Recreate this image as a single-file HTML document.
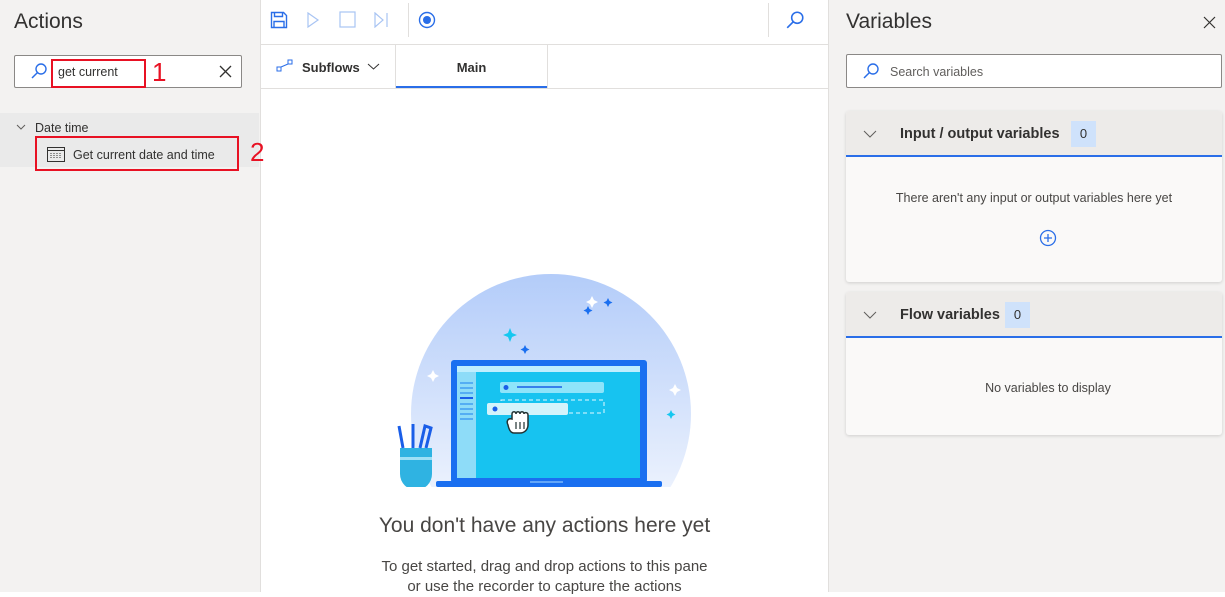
<!DOCTYPE html>
<html><head><meta charset="utf-8"><style>
*{box-sizing:border-box;margin:0;padding:0}
body{width:1225px;height:592px;overflow:hidden;font-family:"Liberation Sans",sans-serif;color:#323130;background:#fff;position:relative}
.a{position:absolute}
.red{position:absolute;border:2px solid #e81123}
</style></head><body>
<!-- left panel -->
<div class="a" style="left:0;top:0;width:261px;height:592px;background:#f3f2f1;border-right:1px solid #e1dfdd"></div>
<div class="a" style="left:14px;top:10px;font-size:21px;color:#323130">Actions</div>
<div class="a" style="left:14px;top:55px;width:228px;height:33px;background:#fff;border:1px solid #8a8886;border-radius:2px"></div>
<svg class="a" style="left:30px;top:62px" width="18" height="18" viewBox="0 0 18 18"><circle cx="11" cy="7" r="5" fill="none" stroke="#2a6ee8" stroke-width="1.4"/><line x1="7.4" y1="10.6" x2="2" y2="16" stroke="#2a6ee8" stroke-width="1.5"/></svg>
<div class="a" style="left:58px;top:65px;font-size:12.5px">get current</div>
<svg class="a" style="left:219px;top:65px" width="13" height="13"><path d="M1 1L12 12M12 1L1 12" stroke="#323130" stroke-width="1.3"/></svg>
<div class="red" style="left:51px;top:59px;width:95px;height:29px"></div>
<div class="a" style="left:152px;top:57px;font-size:26px;color:#e81123">1</div>
<div class="a" style="left:0;top:113px;width:259px;height:54px;background:#eaeaea"></div>
<svg class="a" style="left:16px;top:124px" width="10" height="7"><path d="M1 1L5 5L9 1" stroke="#605e5c" fill="none"/></svg>
<div class="a" style="left:35px;top:121px;font-size:12.5px">Date time</div>
<svg class="a" style="left:47px;top:146px" width="18" height="16" viewBox="0 0 18 16"><rect x="0.5" y="1.5" width="17" height="14" fill="none" stroke="#323130"/><line x1="0.5" y1="4.5" x2="17.5" y2="4.5" stroke="#323130"/><path d="M4 7v6M7 7v6M10 7v6M13 7v6" stroke="#323130" stroke-dasharray="1 1"/></svg>
<div class="a" style="left:73px;top:148px;font-size:12.5px">Get current date and time</div>
<div class="red" style="left:35px;top:136px;width:204px;height:35px"></div>
<div class="a" style="left:250px;top:137px;font-size:26px;color:#e81123">2</div>
<!-- middle -->
<div class="a" style="left:261px;top:44px;width:567px;height:1px;background:#e1dfdd"></div>
<div class="a" style="left:261px;top:88px;width:567px;height:1px;background:#e1dfdd"></div>
<div class="a" style="left:408px;top:3px;width:1px;height:34px;background:#e1dfdd"></div>
<div class="a" style="left:768px;top:3px;width:1px;height:34px;background:#e1dfdd"></div>
<svg class="a" style="left:270px;top:11px" width="18" height="18" viewBox="0 0 18 18"><path d="M1.5 1.5h12l3 3v12h-15z M4.5 1.5v4h8v-4 M4 16.5v-6h10v6" fill="none" stroke="#2a6ee8" stroke-width="1.4"/></svg>
<svg class="a" style="left:306px;top:12px" width="14" height="16"><path d="M2 1L12 8L2 15Z" fill="none" stroke="#a8c4f3" stroke-width="1.2"/></svg>
<svg class="a" style="left:339px;top:11px" width="17" height="17"><rect x="1" y="1" width="15" height="15" fill="none" stroke="#a8c4f3" stroke-width="1.2"/></svg>
<svg class="a" style="left:373px;top:12px" width="16" height="16"><path d="M2 1L10 8L2 15Z" fill="none" stroke="#a8c4f3" stroke-width="1.2"/><line x1="14" y1="1" x2="14" y2="15" stroke="#a8c4f3" stroke-width="1.2"/></svg>
<svg class="a" style="left:418px;top:11px" width="18" height="18"><circle cx="9" cy="9" r="7.5" fill="none" stroke="#2a6ee8" stroke-width="1.4"/><circle cx="9" cy="9" r="4" fill="#2a6ee8"/></svg>
<svg class="a" style="left:785px;top:10px" width="20" height="20" viewBox="0 0 18 18"><circle cx="11" cy="7" r="5" fill="none" stroke="#2a6ee8" stroke-width="1.4"/><line x1="7.4" y1="10.6" x2="2" y2="16" stroke="#2a6ee8" stroke-width="1.5"/></svg>
<div class="a" style="left:395px;top:45px;width:1px;height:43px;background:#e1dfdd"></div>
<div class="a" style="left:547px;top:45px;width:1px;height:43px;background:#e1dfdd"></div>
<svg class="a" style="left:276px;top:59px" width="18" height="13"><rect x="1" y="8" width="4" height="4" fill="none" stroke="#2a6ee8"/><rect x="12" y="1" width="4" height="4" fill="none" stroke="#2a6ee8"/><line x1="5" y1="8" x2="12" y2="5" stroke="#2a6ee8"/></svg>
<div class="a" style="left:302px;top:60px;font-size:13px;font-weight:bold;color:#323130">Subflows</div>
<svg class="a" style="left:367px;top:63px" width="13" height="8"><path d="M1 1L6.5 6L12 1" stroke="#323130" fill="none"/></svg>
<div class="a" style="left:396px;top:60px;width:151px;text-align:center;font-size:13px;font-weight:bold">Main</div>
<div class="a" style="left:396px;top:86px;width:151px;height:2px;background:#2a6ee8"></div>
<div class="a" style="left:828px;top:0;width:1px;height:592px;background:#e1dfdd"></div>
<!-- illustration -->
<svg class="a" style="left:380px;top:270px" width="320" height="225" viewBox="0 0 320 225">
<defs><linearGradient id="g" x1="0" y1="0" x2="0" y2="1"><stop offset="0" stop-color="#b3ccf9"/><stop offset="0.7" stop-color="#e6eefd"/><stop offset="1" stop-color="#fff"/></linearGradient><clipPath id="c"><rect x="0" y="0" width="320" height="217"/></clipPath></defs>
<circle cx="171" cy="144" r="140" fill="url(#g)" clip-path="url(#c)"/>
<rect x="71" y="90" width="196" height="123" rx="3" fill="#1a6ff0"/>
<rect x="77" y="96" width="183" height="112" fill="#17c3f0"/>
<rect x="77" y="96" width="183" height="6" fill="#bfeefe"/>
<rect x="77" y="102" width="19" height="106" fill="#8edcf8"/>
<g stroke="#2f8ff0" stroke-width="1.2"><line x1="80" y1="113" x2="93" y2="113"/><line x1="80" y1="118" x2="93" y2="118"/><line x1="80" y1="123" x2="93" y2="123"/><line x1="80" y1="128" x2="93" y2="128" stroke="#1a5ee8" stroke-width="2"/><line x1="80" y1="134" x2="93" y2="134"/><line x1="80" y1="139" x2="93" y2="139"/><line x1="80" y1="144" x2="93" y2="144"/><line x1="80" y1="149" x2="93" y2="149"/></g>
<rect x="120" y="112" width="104" height="11" rx="2" fill="#8ee4fa"/><circle cx="126" cy="117.5" r="2.5" fill="#1a5ee8"/><line x1="137" y1="117" x2="182" y2="117" stroke="#1a5ee8" stroke-width="1.5"/>
<rect x="121" y="130" width="103" height="13" fill="none" stroke="#e6f9ff" stroke-dasharray="4 3"/>
<rect x="107" y="133" width="81" height="12" rx="2" fill="#d4f3fb"/><circle cx="115" cy="139" r="2.5" fill="#1a5ee8"/>
<path d="M128 155c-2-4 0-7 4-6l0-5c0-3 4-3 4 0c0-3 4-3 4 0c0-3 4-3 4 0c0-2 4-2 4 1l0 10c0 4-3 8-8 8h-6c-3 0-5-3-6-8z" fill="#fff" stroke="#233" stroke-width="1.5"/>
<path d="M136 152v7M140 152v7M144 152v7" stroke="#233" stroke-width="1.2"/>
<rect x="56" y="211" width="226" height="6" rx="2" fill="#1a6ff0"/>
<rect x="150" y="211" width="33" height="2" fill="#63a6f8"/>
<g clip-path="url(#c)"><path d="M20 178h32v26a16 16 0 0 1-32 0z" fill="#2fb3e2"/><rect x="20" y="187" width="32" height="3" fill="#9ee0f6"/></g>
<path d="M23 178l-4-22M33 178v-24M40 178l5-22l6 2l-5 20" stroke="#1a5ee8" stroke-width="3" fill="none"/>
<g fill="#1a6ff0"><path d="M212 26l2 4 4 2-4 2-2 4-2-4-4-2 4-2z" fill="#fff"/><path d="M208 36l1.5 3 3 1.5-3 1.5-1.5 3-1.5-3-3-1.5 3-1.5z"/><path d="M228 28l1.5 3 3 1.5-3 1.5-1.5 3-1.5-3-3-1.5 3-1.5z"/><path d="M130 58l2 5 5 2-5 2-2 5-2-5-5-2 5-2z" fill="#15c7f0"/><path d="M145 75l1.5 3 3 1.5-3 1.5-1.5 3-1.5-3-3-1.5 3-1.5z"/><path d="M53 100l2 4 4 2-4 2-2 4-2-4-4-2 4-2z" fill="#fff"/><path d="M295 114l2 4 4 2-4 2-2 4-2-4-4-2 4-2z" fill="#fff"/><path d="M291 140l1.5 3 3 1.5-3 1.5-1.5 3-1.5-3-3-1.5 3-1.5z" fill="#15c7f0"/></g>
</svg>
<div class="a" style="left:261px;top:514px;width:567px;text-align:center;font-size:21px;color:#484644">You don't have any actions here yet</div>
<div class="a" style="left:261px;top:557px;width:567px;text-align:center;font-size:15px;line-height:20px;color:#484644">To get started, drag and drop actions to this pane<br>or use the recorder to capture the actions</div>
<!-- right -->
<div class="a" style="left:829px;top:0;width:396px;height:592px;background:#f3f2f1"></div>
<div class="a" style="left:846px;top:10px;font-size:21px">Variables</div>
<svg class="a" style="left:1203px;top:16px" width="13" height="13"><path d="M1 1L12 12M12 1L1 12" stroke="#323130" stroke-width="1.2"/></svg>
<div class="a" style="left:846px;top:54px;width:376px;height:34px;background:#fff;border:1px solid #8a8886;border-radius:2px"></div>
<svg class="a" style="left:862px;top:62px" width="18" height="18" viewBox="0 0 18 18"><circle cx="11" cy="7" r="5" fill="none" stroke="#2a6ee8" stroke-width="1.4"/><line x1="7.4" y1="10.6" x2="2" y2="16" stroke="#2a6ee8" stroke-width="1.5"/></svg>
<div class="a" style="left:890px;top:65px;font-size:12.5px;color:#605e5c">Search variables</div>
<div class="a" style="left:846px;top:111px;width:376px;height:171px;background:#faf9f8;border-radius:3px;box-shadow:0 1px 3px rgba(0,0,0,.15)"></div>
<div class="a" style="left:846px;top:111px;width:376px;height:46px;background:#edebe9;border-bottom:2px solid #2a6ee8;border-radius:3px 3px 0 0"></div>
<svg class="a" style="left:863px;top:130px" width="14" height="8"><path d="M1 1L7 7L13 1" stroke="#605e5c" fill="none"/></svg>
<div class="a" style="left:900px;top:126px;font-size:14.5px;font-weight:bold">Input / output variables</div>
<div class="a" style="left:1071px;top:121px;width:25px;height:26px;background:#cfe2fb;font-size:13px;text-align:center;line-height:26px">0</div>
<div class="a" style="left:846px;top:191px;width:376px;text-align:center;font-size:12.5px;color:#484644">There aren't any input or output variables here yet</div>
<svg class="a" style="left:1039px;top:229px" width="18" height="18"><circle cx="9" cy="9" r="7.5" fill="none" stroke="#2a6ee8" stroke-width="1.3"/><path d="M9 5v8M5 9h8" stroke="#2a6ee8" stroke-width="1.3"/></svg>
<div class="a" style="left:846px;top:292px;width:376px;height:143px;background:#faf9f8;border-radius:3px;box-shadow:0 1px 3px rgba(0,0,0,.15)"></div>
<div class="a" style="left:846px;top:292px;width:376px;height:46px;background:#edebe9;border-bottom:2px solid #2a6ee8;border-radius:3px 3px 0 0"></div>
<svg class="a" style="left:863px;top:311px" width="14" height="8"><path d="M1 1L7 7L13 1" stroke="#605e5c" fill="none"/></svg>
<div class="a" style="left:900px;top:307px;font-size:14.5px;font-weight:bold">Flow variables</div>
<div class="a" style="left:1005px;top:302px;width:25px;height:26px;background:#cfe2fb;font-size:13px;text-align:center;line-height:26px">0</div>
<div class="a" style="left:846px;top:381px;width:404px;text-align:center;font-size:12.5px;color:#484644">No variables to display</div>
</body></html>
